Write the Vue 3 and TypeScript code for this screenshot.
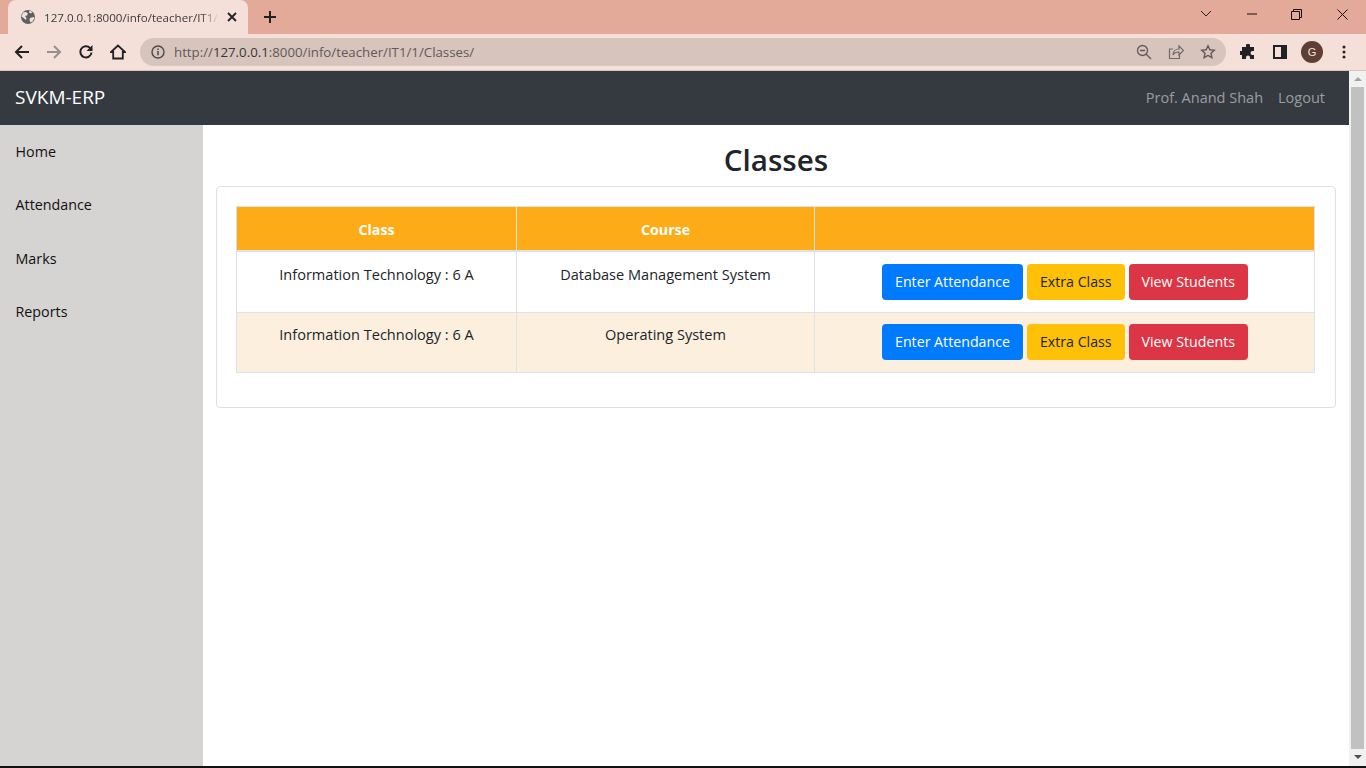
<template>
  <div class="window">
    <div class="tabstrip">
      <div class="tab">
        <svg class="globe" width="16" height="16" viewBox="0 0 16 16">
          <circle cx="8" cy="8" r="7" fill="#5c5f63" />
          <path d="M3 3.500 6 3l2 1.500-1 2-2 .5 1.500 2L6 11 3.500 9 1.500 7.500ZM10 9l3.500-1 1 1-2 3.500-2 1L9.500 11ZM9.500 1.500l3 1.500-1.500 1.500-2-1Z" fill="#f5e0d9" />
        </svg>
        <span class="tab-title">127.0.0.1:8000/info/teacher/IT1/1</span>
        <svg class="tab-close" width="10" height="10" viewBox="0 0 10 10">
          <path d="M1 1l8 8M9 1 1 9" stroke="#202124" stroke-width="1.800" />
        </svg>
      </div>
      <svg class="new-tab" width="12" height="12" viewBox="0 0 12 12">
        <path d="M6 0v12M0 6h12" stroke="#202124" stroke-width="2" />
      </svg>
      <div class="window-controls">
        <svg width="12" height="8" viewBox="0 0 12 8"><path d="M1 1l5 5 5-5" fill="none" stroke="#202124" stroke-width="1" /></svg>
        <svg width="10" height="2" viewBox="0 0 10 2"><path d="M0 1h10" stroke="#111" stroke-width="1" /></svg>
        <svg width="11" height="11" viewBox="0 0 11 11"><path d="M.5 2.500h8v8h-8zM2.500 2.500v-2h8v8h-2" fill="none" stroke="#111" stroke-width="1" /></svg>
        <svg width="11" height="11" viewBox="0 0 11 11"><path d="M.5.5l10 10M10.500.5l-10 10" stroke="#111" stroke-width="1" /></svg>
      </div>
    </div>

    <div class="toolbar">
      <svg class="tool" width="16" height="16" viewBox="0 0 16 16"><path d="M15 8H2M8 2 2 8l6 6" fill="none" stroke="#202124" stroke-width="2" /></svg>
      <svg class="tool" width="16" height="16" viewBox="0 0 16 16"><path d="M1 8h13M8 2l6 6-6 6" fill="none" stroke="#9a8f8c" stroke-width="2" /></svg>
      <svg class="tool" width="16" height="16" viewBox="0 0 16 16">
        <path d="M13.500 8.500A5.600 5.600 0 1 1 12 4" fill="none" stroke="#202124" stroke-width="2" />
        <path d="M14.500 1v6h-6z" fill="#202124" />
      </svg>
      <svg class="tool" width="16" height="16" viewBox="0 0 16 16"><path d="M8 1.500 1 8h2.200v6.500h9.600V8H15Z" fill="none" stroke="#202124" stroke-width="1.800" /></svg>
      <div class="omnibox">
        <svg width="14" height="14" viewBox="0 0 14 14">
          <circle cx="7" cy="7" r="6" fill="none" stroke="#4d4a49" stroke-width="1.400" />
          <path d="M7 6v4.200M7 3.500v1.400" stroke="#4d4a49" stroke-width="1.500" />
        </svg>
        <span class="url">http://<span class="host">127.0.0.1</span>:8000/info/teacher/IT1/1/Classes/</span>
        <div class="omni-icons">
          <svg width="16" height="16" viewBox="0 0 16 16">
            <circle cx="6.500" cy="6.500" r="5" fill="none" stroke="#5f5a58" stroke-width="1.300" />
            <path d="M4 6.500h5M10.200 10.200 15 15" stroke="#5f5a58" stroke-width="1.300" />
          </svg>
          <svg width="16" height="16" viewBox="0 0 16 16">
            <path d="M5 5H1.500v9.500h10V11M5 11c0-4 3-6 6-6V2l4.500 4.500L11 11V8c-3 0-5 1-6 3Z" fill="none" stroke="#6f6a68" stroke-width="1.200" />
          </svg>
          <svg width="16" height="16" viewBox="0 0 16 16">
            <path d="m8 1.800 1.900 4 4.400.5-3.300 3 .9 4.400L8 11.500l-3.900 2.200.9-4.400-3.300-3 4.400-.5Z" fill="none" stroke="#5f5a58" stroke-width="1.400" />
          </svg>
        </div>
      </div>
      <svg class="ext" width="16" height="16" viewBox="0 0 16 16">
        <path d="M6 1.500a2 2 0 0 1 4 0V3h4v4h-1.500a2 2 0 0 0 0 4H14v4H10v-1.500a2 2 0 0 0-4 0V15H2v-4H.8a2 2 0 0 1 0-4H2V3h4Z" fill="#202124" />
      </svg>
      <svg class="panel" width="14" height="14" viewBox="0 0 14 14">
        <path d="M1 1h12v12H1z" fill="none" stroke="#202124" stroke-width="2" />
        <path d="M8 1h5v12H8z" fill="#202124" />
      </svg>
      <div class="avatar">G</div>
      <svg class="menu-dots" width="4" height="14" viewBox="0 0 4 14">
        <circle cx="2" cy="2" r="1.500" fill="#202124" />
        <circle cx="2" cy="7" r="1.500" fill="#202124" />
        <circle cx="2" cy="12" r="1.500" fill="#202124" />
      </svg>
    </div>

    <div class="viewport">
      <div class="page">
        <nav class="navbar">
          <a class="brand">SVKM-ERP</a>
          <div class="nav-right">
            <a>{{ teacher }}</a>
            <a>Logout</a>
          </div>
        </nav>
        <div class="body-row">
          <aside class="sidebar">
            <a v-for="item in sideLinks" :key="item">{{ item }}</a>
          </aside>
          <main class="content">
            <h2>Classes</h2>
            <div class="card">
              <table>
                <thead>
                  <tr>
                    <th class="col-class">Class</th>
                    <th class="col-course">Course</th>
                    <th></th>
                  </tr>
                </thead>
                <tbody>
                  <tr v-for="row in rows" :key="row.course">
                    <td>{{ row.name }}</td>
                    <td>{{ row.course }}</td>
                    <td class="actions">
                      <a class="btn blue">Enter Attendance</a>
                      <a class="btn amber">Extra Class</a>
                      <a class="btn red">View Students</a>
                    </td>
                  </tr>
                </tbody>
              </table>
            </div>
          </main>
        </div>
      </div>
      <div class="scrollbar">
        <div class="arrow up"></div>
        <div class="thumb"></div>
        <div class="arrow down"></div>
      </div>
    </div>
    <div class="taskbar-edge"></div>
  </div>
</template>

<script setup lang="ts">
const teacher = "Prof. Anand Shah";
const sideLinks = ["Home", "Attendance", "Marks", "Reports"];
const rows = [
  { name: "Information Technology : 6 A", course: "Database Management System" },
  { name: "Information Technology : 6 A", course: "Operating System" },
];
</script>

<style>
html,
body {
  margin: 0;
  overflow: hidden;
}
</style>

<style scoped>
.window {
  width: 1366px;
  height: 768px;
  display: flex;
  flex-direction: column;
  font-family: "Open Sans", "Noto Sans", sans-serif;
  color: #212529;
  background: #fff;
}

.tabstrip {
  height: 34px;
  flex: none;
  background: #e3aa99;
  display: flex;
  align-items: flex-end;
  padding-left: 8px;
}

.tab {
  width: 240px;
  height: 34px;
  box-sizing: border-box;
  background: #f5e0d9;
  border-radius: 8px 8px 0 0;
  display: flex;
  align-items: center;
  padding: 0 11px 0 12px;
}

.globe {
  flex: none;
  margin-right: 8px;
}

.tab-title {
  flex: 1;
  overflow: hidden;
  white-space: nowrap;
  font-size: 11.600px;
  color: #3c3a39;
  -webkit-mask-image: linear-gradient(to right, #000 90%, transparent);
  mask-image: linear-gradient(to right, #000 90%, transparent);
}

.tab-close {
  flex: none;
  margin-left: 8px;
}

.new-tab {
  margin: 0 0 11px 16px;
}

.window-controls {
  margin-left: auto;
  width: 166px;
  height: 28px;
  align-self: flex-start;
  display: flex;
  align-items: center;
  justify-content: space-between;
  padding-right: 18px;
  box-sizing: border-box;
}

.toolbar {
  height: 36px;
  flex: none;
  background: #f5e0d9;
  display: flex;
  align-items: center;
  padding-left: 14px;
  border-bottom: 1px solid #d9c4bd;
  box-sizing: content-box;
}

.tool {
  flex: none;
  margin-right: 16px;
}

.omnibox {
  width: 1086px;
  height: 28px;
  margin-left: -2px;
  border-radius: 14px;
  background: #d6c4bd;
  display: flex;
  align-items: center;
  padding: 0 10px 0 11px;
  box-sizing: border-box;
  flex: none;
}

.url {
  margin-left: 9px;
  font-size: 13.250px;
  color: #5f5a58;
  white-space: nowrap;
}

.host {
  color: #3a3635;
}

.omni-icons {
  margin-left: auto;
  display: flex;
  gap: 16px;
}

.ext {
  flex: none;
  margin-left: 14px;
}

.panel {
  flex: none;
  margin-left: 17px;
}

.avatar {
  flex: none;
  width: 22px;
  height: 22px;
  margin-left: 14px;
  border-radius: 50%;
  background: #5d3f35;
  color: #f5e0d9;
  font-family: "Liberation Sans", sans-serif;
  font-size: 11px;
  display: flex;
  align-items: center;
  justify-content: center;
}

.menu-dots {
  flex: none;
  margin-left: 19px;
}

.viewport {
  flex: 1;
  min-height: 0;
  display: flex;
}

.page {
  flex: 1;
  min-width: 0;
  display: flex;
  flex-direction: column;
}

.navbar {
  height: 54px;
  flex: none;
  background: #343a40;
  display: flex;
  align-items: center;
  justify-content: space-between;
  padding: 0 24px 2px 15px;
  box-sizing: border-box;
}

.brand {
  color: #fff;
  font-size: 19px;
}

.nav-right {
  display: flex;
  gap: 15px;
  color: rgba(255, 255, 255, 0.5);
  font-size: 14.500px;
}

.body-row {
  flex: 1;
  min-height: 0;
  display: flex;
}

.sidebar {
  width: 203px;
  flex: none;
  background: #d5d4d2;
  display: flex;
  flex-direction: column;
  padding-top: 8px;
  font-size: 14.300px;
  color: #111;
}

.sidebar a {
  height: 53.400px;
  line-height: 37px;
  padding-left: 15.500px;
}

.content {
  flex: 1;
  min-width: 0;
  padding: 0 13px 0 13px;
}

h2 {
  margin: 0;
  height: 61px;
  padding-top: 16px;
  box-sizing: border-box;
  text-align: center;
  font-size: 29.600px;
  line-height: 38px;
  font-weight: 600;
}

.card {
  border: 1px solid #dfdfdf;
  border-radius: 4px;
  padding: 19px 20px 33px 19px;
  height: 222px;
  box-sizing: border-box;
}

table {
  width: 100%;
  border-collapse: collapse;
  table-layout: fixed;
  font-size: 14.550px;
}

th,
td {
  border: 1px solid #dee2e6;
  text-align: center;
  vertical-align: top;
}

th {
  height: 44px;
  background: #fdab17;
  color: #fff;
  font-size: 14.200px;
  font-weight: 700;
  vertical-align: middle;
  border-bottom-width: 2px;
  padding: 2px 0 0;
  box-sizing: border-box;
}

.col-class {
  width: 280px;
}

.col-course {
  width: 298px;
}

td {
  padding: 10px 12px 0;
  height: 62px;
  box-sizing: border-box;
  line-height: 24px;
}

tbody tr:nth-child(even) td {
  height: 60px;
  padding-top: 9px;
  background: #fcefde;
}

td.actions,
tbody tr:nth-child(even) td.actions {
  font-size: 0;
  padding: 12px 0 0 1px;
  white-space: nowrap;
}

tbody tr:nth-child(even) td.actions {
  padding-top: 11px;
}

.btn {
  display: inline-block;
  height: 36px;
  line-height: 36px;
  padding: 0 13px;
  margin: 0 2px;
  border-radius: 4px;
  font-size: 14.200px;
  vertical-align: top;
}

.blue {
  background: #007bff;
  color: #fff;
}

.amber {
  background: #ffc107;
  color: #212529;
}

.red {
  background: #dc3545;
  color: #fff;
}

.scrollbar {
  width: 17px;
  flex: none;
  background: #f1f1f1;
  display: flex;
  flex-direction: column;
  align-items: center;
}

.arrow {
  flex: none;
  width: 0;
  height: 0;
  border-left: 4px solid transparent;
  border-right: 4px solid transparent;
}

.arrow.up {
  margin: 6px 0 6px;
  border-bottom: 4px solid #a3a3a3;
}

.arrow.down {
  margin: 6px 0 7px;
  border-top: 4px solid #505050;
}

.thumb {
  flex: 1;
  width: 13px;
  background: #c1c1c1;
}

.taskbar-edge {
  height: 2px;
  flex: none;
  background: #111;
}
</style>
